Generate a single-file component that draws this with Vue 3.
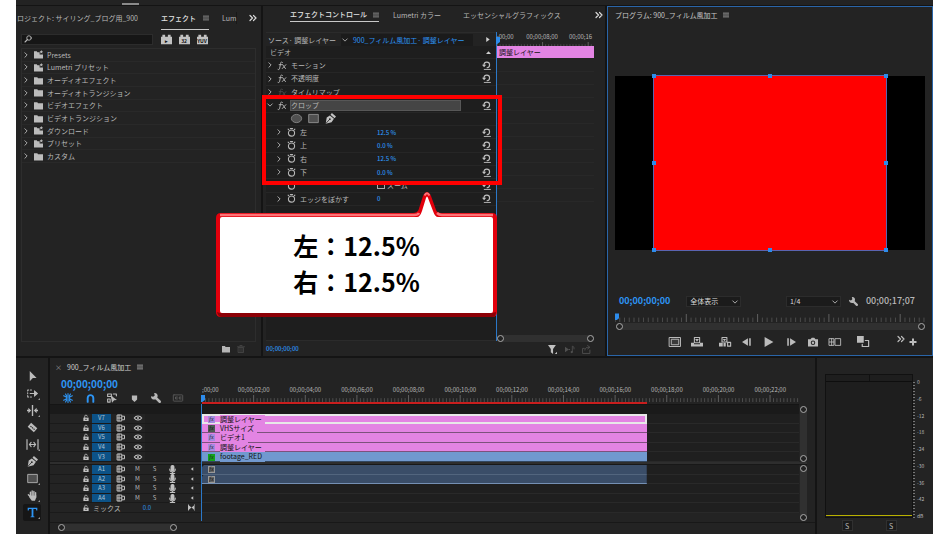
<script setup>
import { h, ref } from 'vue'

const S = 'fill="none" stroke="currentColor" stroke-linecap="round" stroke-linejoin="round"'
const glyphs = {
  chevron: `<path d="M5 2l6 6-6 6" ${S} stroke-width="2.400"/>`,
  down: `<path d="M2 5l6 6 6-6" ${S} stroke-width="2.400"/>`,
  more: `<path d="M2 3l5 5-5 5M9 3l5 5-5 5" ${S} stroke-width="2.400"/>`,
  menu: `<path d="M1 3h14M1 8h14M1 13h14" ${S} stroke-width="1.800"/>`,
  right: '<path d="M4 0l11 8-11 8z" fill="currentColor"/>',
  left: '<path d="M13 1L3 8l10 7z" fill="currentColor"/>',
  up: '<path d="M0 13l8-9 8 9z" fill="currentColor"/>',
  search: `<circle cx="10" cy="6" r="4.500" ${S} stroke-width="1.800"/><path d="M7 9l-5 5" ${S} stroke-width="2.200"/>`,
  folder: '<path d="M0 2h6l1 2h9v11H0z" fill="currentColor"/>',
  preset: '<path d="M0 2h5l1 2h4v4h6v7H0z" fill="currentColor"/><path d="M13 0l1 2 2 .4-1.500 1.500.4 2.100-1.900-1-1.900 1 .4-2.100L10 2.400l2-.4z" fill="currentColor"/>',
  fx: `<path d="M8 2.500C6 .5 5 2 4.600 4.500L3 12.500C2.600 15 1.600 16 0 15M2 6.500h5.500" ${S} stroke-width="1.600"/><path d="M8.500 6.500c2 0 2 7 5 7M14 6.500l-6.500 7" ${S} stroke-width="1.600"/>`,
  reset: `<path d="M3.500 8V6.500a5 5 0 1 1 5.500 5.500" ${S} stroke-width="2"/><path d="M0 6.500h7.500L3.700 11z" fill="currentColor"/><path d="M4 15h11" ${S} stroke-width="1.600"/>`,
  watch: `<circle cx="8" cy="9" r="5.500" ${S} stroke-width="1.900"/><path d="M6 1h4M3 3L2 2M13 3l1-1" ${S} stroke-width="1.900"/>`,
  ellipse: '<ellipse cx="8" cy="8" rx="7.500" ry="6" fill="#505050" stroke="currentColor" stroke-width="1"/>',
  rect: '<path d="M1 2h14v12H1z" fill="#505050" stroke="currentColor" stroke-width="1.200"/>',
  pen: '<path d="M10 0l6 5-2 2.500-6-5zM7 3.500l6 5-3.500 5L1 15.500l1.500-9z" fill="currentColor"/><path d="M1 15.500l5-5.500" stroke="#232323" stroke-width="1.200"/><circle cx="7" cy="9" r="1.300" fill="#232323"/>',
  trash: `<path d="M3 5h10v10H3zM1 3.500h14M6 1h4M6 7v6M10 7v6" ${S} stroke-width="1.500"/>`,
  filter: '<path d="M0 0h14L9 7v9l-4-3V7zM12 16h4v-4z" fill="currentColor"/>',
  playnote: `<path d="M0 3l7 5-7 5zM7 7h2v2H7z" fill="currentColor"/><path d="M13 12V2l3 2v3" ${S} stroke-width="1.500"/><circle cx="12" cy="12.500" r="2" fill="currentColor"/>`,
  export: `<path d="M4 6H1v9h13V9M5 9c0-4 3-5 8-5M10 1l4 3-4 3" ${S} stroke-width="1.600"/>`,
  arrow: '<path d="M4 0l10 10H8.500L4 15z" fill="currentColor"/>',
  trackfwd: `<path d="M1 3h8M1 13h8M1 3v10" ${S} stroke-width="1.500" stroke-dasharray="1.500 2.500"/><path d="M4 8h8M11 4.500l4 3.500-4 3.500z" fill="currentColor" stroke="currentColor" stroke-width="1.500"/>`,
  ripple: '<path d="M7 0h2v16H7zM6 8L2 4v3H0v2h2v3zM10 8l4-4v3h2v2h-2v3z" fill="currentColor"/>',
  razor: '<path d="M6 1l9 8-5 6-9-8z" fill="currentColor"/><path d="M5 6l6 5" stroke="#232323" stroke-width="1.500" stroke-dasharray="2 1"/>',
  slip: `<path d="M0 1v14M16 1v14M3.500 8h9M6 5L3.500 8 6 11M10 5l2.500 3-2.500 3" ${S} stroke-width="1.700"/>`,
  hand: `<path d="M5 9V3M7.500 8V1.500M10 8V2M12.500 9V4M5 10L2 7" ${S} stroke-width="2"/><path d="M4 8h9.500v3l-2 4.500H7L3 10z" fill="currentColor"/>`,
  type: '<path d="M1 1h14v4h-1.500L13 3H9.300v10.500L11 14v1H5v-1l1.700-.500V3H3l-.500 2H1z" fill="currentColor"/>',
  nest: `<path d="M8 1v5M8 10v5M1 4.500l4.500 2M10.500 9.500l4.500 2M1 11.500l4.500-2M10.500 6.500l4.500-2M4 1.500l2 3.500M10 11l2 3.500M12 1.500L10 5M6 11l-2 3.500M5 8h6" ${S} stroke-width="1.700"/>`,
  magnet: `<path d="M3 14V7a5 5 0 0 1 10 0v7" ${S} stroke-width="3.400"/>`,
  linked: `<path d="M1 1.500h6v4H1zM10 1.500h5v3M1 9.500h4v5H1zM7 5l2 3" ${S} stroke-width="1.800"/><path d="M6 4l10 7-4.500.500L8 15.500z" fill="currentColor"/>`,
  marker: '<path d="M2 1h12v9l-6 6-6-6z" fill="currentColor"/>',
  wrench: `<path d="M7 7l7 7" ${S} stroke-width="4"/><path d="M0 5l3.500 1L6 4 5 0c4-.500 6.500 2.500 5.500 6L7 10.500C2 11 0 8.500 0 5z" fill="currentColor"/>`,
  cc: `<rect x="0.500" y="3" width="15" height="10" rx="1" ${S} stroke-width="1.400"/><path d="M7 6.500H4v3h3M13 6.500h-3v3h3" ${S} stroke-width="1.600"/>`,
  lock: `<path d="M1 7h14v9H1z" fill="currentColor"/><path d="M4.500 7V4a3.500 3 0 0 1 7-1" ${S} stroke-width="2.200"/><path d="M8 10v3.500" stroke="#232323" stroke-width="3"/>`,
  sync: `<path d="M1 2h8.500v12H1zM1 8h8.500M11 4.500h4v7h-4M4 2v12" ${S} stroke-width="2"/>`,
  eye: `<path d="M0.500 8C4 2.500 12 2.500 15.500 8 12 13.500 4 13.500 .5 8z" ${S} stroke-width="2.200"/><circle cx="8" cy="8" r="2" fill="currentColor"/>`,
  mic: `<rect x="4.500" y="0" width="7" height="11" rx="3" fill="currentColor"/><path d="M3 7c0 7 10 7 10 0M8 12v3M4 15h8" ${S} stroke-width="1.800"/>`,
  keyframes: '<path d="M1 2l7 6-7 6zM15 2L8 8l7 6zM0 1h2v14H0zM14 1h2v14h-2z" fill="currentColor"/>',
  safe: `<path d="M0.700 2h14.600v12H.7z" ${S} stroke-width="1.300"/><path d="M3 4.300h10v7.400H3z" fill="#3a3a3a" stroke="currentColor" stroke-width="1.300"/>`,
  lift: `<path d="M0 9h4v2h8V9h4v5H0z" fill="currentColor"/><path d="M4.500 2h7v7h-7z" ${S} stroke-width="1.400"/><path d="M5.500 4h5L8 7.500z" fill="currentColor"/>`,
  extract: `<path d="M0 9h5v5H0zM6 9h3v5H6z" fill="currentColor"/><path d="M11.500 8.500h4v5h-4zM4 2h6.500v6H4z" ${S} stroke-width="1.500"/><path d="M5 4h4.500L7.200 7z" fill="currentColor"/>`,
  stepback: '<path d="M9.500 2L0 8l9.500 6zM11.500 2H14v12h-2.500z" fill="currentColor"/>',
  play: '<path d="M1 0l14 8-14 8z" fill="currentColor"/>',
  stepfwd: '<path d="M6.500 2L16 8l-9.500 6zM2 2h2.500v12H2z" fill="currentColor"/>',
  camera: '<path d="M0 3.500h4l2-2.500h4l2 2.500h4V15H0z" fill="currentColor"/><circle cx="8" cy="9" r="3.600" fill="#232323"/><circle cx="8" cy="9" r="2" fill="currentColor"/>',
  compare: `<path d="M8.500 3.500h7v9h-7zM.5 3.500h6v9h-6zM.5 8h6M3.500 3.500v9" ${S} stroke-width="1.200"/>`,
  proxy: `<path d="M0 0h9v9H0z" fill="currentColor"/><path d="M11 6h4.500v8H7v-3" ${S} stroke-width="1.600"/>`,
  plus: '<path d="M6 1h4v5h5v4h-5v5H6v-5H1V6h5z" fill="currentColor"/>',
  brick: '<path d="M0 4h2V1h4v3h4V1h4v3h2v11H0z" fill="currentColor"/>',
}
const Icon = (p) => h('svg', { class: 'icon', viewBox: '0 0 16 16', 'aria-hidden': 'true', innerHTML: glyphs[p.name] })
Icon.props = ['name']

const Ticks = (p) => {
  const lines = []
  const step = p.major / 15
  for (let i = 0; i * step <= 100; i++) {
    lines.push(h('line', {
      x1: i * step + '%', x2: i * step + '%', y1: i % 15 ? '45%' : '0%', y2: '100%',
      stroke: i % 15 ? '#4c4c4c' : '#606060',
    }))
  }
  return h('svg', { class: 'ticks', 'aria-hidden': 'true' }, lines)
}
Ticks.props = ['major']

const folders = [
  ['preset', 'Presets'], ['preset', 'Lumetri プリセット'], ['folder', 'オーディオエフェクト'],
  ['folder', 'オーディオトランジション'], ['folder', 'ビデオエフェクト'], ['folder', 'ビデオトランジション'],
  ['preset', 'ダウンロード'], ['preset', 'プリセット'], ['folder', 'カスタム'],
]
const bricks = [['▸', '高速処理エフェクト'], ['32', '32 ビットカラー'], ['YUV', 'YUV エフェクト']]
const crops = [['左', '12.5 %'], ['上', '0.0 %'], ['右', '12.5 %'], ['下', '0.0 %']]
const handles = ['tl', 'tc', 'tr', 'ml', 'mr', 'bl', 'bc', 'br']
const transport = [
  ['safe', 'セーフマージン'], ['lift', 'リフト'], ['extract', '抽出'], ['stepback', '前のフレーム'], ['play', '再生'],
  ['stepfwd', '次のフレーム'], ['camera', 'フレームを書き出し'], ['compare', '比較表示'], ['proxy', 'プロキシの切り替え'],
]
const tools = [
  ['arrow', '選択'], ['trackfwd', 'トラックの前方選択'], ['ripple', 'リップル'], ['razor', 'レーザー'], ['slip', 'スリップ'],
  ['pen', 'ペン'], ['rect', '長方形'], ['hand', '手のひら'], ['type', '横書き文字'],
]
const options = [
  ['nest', 'ネスト', true], ['magnet', 'スナップ', true], ['linked', 'リンク', false],
  ['marker', 'マーカー', false], ['wrench', '表示設定', false], ['cc', 'キャプション', false],
]
const times = ['02', '04', '06', '08', '10', '12', '14', '16', '18', '20', '22'].map((t) => `00;00;${t};00`)
const video = [
  { id: 'V7', name: '調整レイヤー', kind: 'selected' },
  { id: 'V6', name: 'VHSサイズ', kind: 'dark' },
  { id: 'V5', name: 'ビデオ1', kind: '' },
  { id: 'V4', name: '調整レイヤー', kind: '' },
  { id: 'V3', name: 'footage_RED', kind: 'footage' },
]
const audio = ['A1', 'A2', 'A3', 'A4']
const levels = ['0', '-6', '-12', '-18', '-24', '-30', '-36', '-42', 'dB']
const tool = ref('type')
const query = ref('')
const zoom = ref(false)
const clipLength = 74.5
</script>

<template>
  <main class="app">
    <div class="topbar"><span class="grip"></span></div>

    <div class="upper">
      <section class="panel effects">
        <nav class="tabs">
          <button class="project">ロジェクト: サイリング_ブログ用_900</button>
          <button class="active">エフェクト</button>
          <button class="menu" aria-label="パネルメニュー"><Icon name="menu" /></button>
          <button class="cut">Lum</button>
          <button class="more" aria-label="その他のパネル"><Icon name="more" /></button>
        </nav>
        <div class="searchbar">
          <label class="search"><Icon name="search" /><input v-model="query" type="text" aria-label="検索"></label>
          <button v-for="b in bricks" :key="b[0]" class="brick" :aria-label="b[1]"><Icon name="brick" /><span>{{ b[0] }}</span></button>
        </div>
        <div class="tree">
          <ul>
            <li v-for="f in folders" :key="f[1]"><Icon name="chevron" /><Icon :name="f[0]" class="dir" />{{ f[1] }}</li>
          </ul>
        </div>
        <footer>
          <button aria-label="新規ビン"><Icon name="folder" /></button>
          <button class="off" aria-label="削除"><Icon name="trash" /></button>
        </footer>
      </section>

      <section class="panel controls">
        <nav class="tabs">
          <button class="active">エフェクトコントロール</button>
          <button class="menu" aria-label="パネルメニュー"><Icon name="menu" /></button>
          <button class="lumetri">Lumetri カラー</button>
          <button class="graphics">エッセンシャルグラフィックス</button>
          <button class="more" aria-label="その他のパネル"><Icon name="more" /></button>
        </nav>
        <div class="split">
          <div class="params">
            <div class="source">
              <span>ソース· 調整レイヤー</span>
              <button><Icon name="down" />900_フィルム風加工· 調整レイヤー</button>
              <Icon name="right" class="end" />
            </div>
            <div class="rows">
              <div class="row heading"><span class="name">ビデオ</span><Icon name="up" class="end" /></div>
              <div class="row"><Icon name="chevron" class="tw" /><Icon name="fx" class="tag" /><span class="name">モーション</span><button class="reset" aria-label="リセット"><Icon name="reset" /></button></div>
              <div class="row"><Icon name="chevron" class="tw" /><Icon name="fx" class="tag" /><span class="name">不透明度</span><button class="reset" aria-label="リセット"><Icon name="reset" /></button></div>
              <div class="row"><Icon name="chevron" class="tw" /><Icon name="fx" class="tag dim" /><span class="name">タイムリマップ</span></div>
              <div class="row"><Icon name="down" class="tw" /><Icon name="fx" class="tag" /><span class="name picked">クロップ</span><button class="reset" aria-label="リセット"><Icon name="reset" /></button></div>
              <div class="row masks">
                <button aria-label="楕円形マスク"><Icon name="ellipse" /></button>
                <button aria-label="長方形マスク"><Icon name="rect" /></button>
                <button class="nib" aria-label="ペンマスク"><Icon name="pen" /></button>
              </div>
              <div v-for="c in crops" :key="c[0]" class="row sub">
                <Icon name="chevron" class="tw" /><Icon name="watch" class="tag" /><span class="key">{{ c[0] }}</span>
                <button class="value">{{ c[1] }}</button><button class="reset" aria-label="リセット"><Icon name="reset" /></button>
              </div>
              <div class="row sub">
                <span class="tw"></span><Icon name="watch" class="tag" /><span class="key"></span>
                <label class="check"><input v-model="zoom" type="checkbox">ズーム</label><button class="reset" aria-label="リセット"><Icon name="reset" /></button>
              </div>
              <div class="row sub">
                <Icon name="chevron" class="tw" /><Icon name="watch" class="tag" /><span class="key">エッジをぼかす</span>
                <button class="value">0</button><button class="reset" aria-label="リセット"><Icon name="reset" /></button>
              </div>
            </div>
          </div>
          <div class="keys">
            <div class="keyruler">
              <div class="times"><span>;00;00</span><span>00;00;08;00</span><span>00;00;16</span></div>
              <Ticks major="47" />
            </div>
            <div class="keyclip">調整レイヤー</div>
            <div class="keylines"></div>
            <div class="hscroll"><i></i><i></i></div>
            <span class="head"></span>
          </div>
        </div>
        <footer>
          <button class="time">00;00;00;00</button>
          <button aria-label="フィルター"><Icon name="filter" /></button>
          <button class="off" aria-label="オーディオ再生"><Icon name="playnote" /></button>
          <button class="off" aria-label="書き出し"><Icon name="export" /></button>
        </footer>

        <div class="frame"></div>
        <div class="callout">
          <svg viewBox="0 0 281 126" aria-hidden="true">
            <path d="M5 22H197Q201 22 202.500 19L207 5Q211-3 215 5L220 19Q221 22 225 22H276Q281 22 281 27V121Q281 126 276 126H5Q0 126 0 121V27Q0 22 5 22z" fill="#e2000c" />
            <path d="M1 121Q2 126 6 126H276Q280 126 280 121L276 122H4z" fill="#8c0006" />
            <path d="M4 24H198Q202 24 203 22M221 22Q223 24 226 24H277" fill="none" stroke="#ff7377" stroke-width="2.500" />
            <path d="M208.500 4.500Q211 0 213.500 4.500" fill="none" stroke="#ff7377" stroke-width="2" />
            <path d="M6 26H201Q204 26 206 20L210 7Q211 4 212 7L217 20Q219 26 222 26H275Q277 26 277 28V120Q277 122 275 122H6Q4 122 4 120V28Q4 26 6 26z" fill="#fff" />
          </svg>
          <p>左：12.5%<br>右：12.5%</p>
        </div>
      </section>

      <section class="panel program">
        <nav class="tabs">
          <button>プログラム: 900_フィルム風加工</button>
          <button class="menu" aria-label="パネルメニュー"><Icon name="menu" /></button>
        </nav>
        <div class="viewer">
          <div class="cropped"><i v-for="p in handles" :key="p" :class="p"></i></div>
        </div>
        <div class="status">
          <button class="time">00;00;00;00</button>
          <label class="pick fit"><select aria-label="表示倍率"><option>全体表示</option></select><Icon name="down" /></label>
          <label class="pick"><select aria-label="再生解像度"><option>1/4</option></select><Icon name="down" /></label>
          <button class="setup" aria-label="設定"><Icon name="wrench" /></button>
          <span class="duration">00;00;17;07</span>
        </div>
        <div class="progruler"><Ticks major="23" /><span class="marker"></span></div>
        <div class="hscroll"><i></i><i></i></div>
        <div class="transport">
          <button v-for="t in transport" :key="t[0]" :class="['do', t[0]]" :aria-label="t[1]"><Icon :name="t[0]" /></button>
          <button class="last" aria-label="その他"><Icon name="more" /></button>
          <button class="add" aria-label="ボタンエディター"><Icon name="plus" /></button>
        </div>
      </section>
    </div>

    <div class="lower">
      <aside class="panel tools">
        <button v-for="t in tools" :key="t[0]" :class="{ on: tool === t[0] }" :aria-label="t[1]" @click="tool = t[0]"><Icon :name="t[0]" /></button>
      </aside>

      <section class="panel timeline">
        <nav class="seq"><button class="close" aria-label="閉じる">×</button><span>900_フィルム風加工</span><button class="menu" aria-label="パネルメニュー"><Icon name="menu" /></button></nav>
        <div class="board">
          <div class="corner">
            <button class="time">00;00;00;00</button>
            <div class="opts"><button v-for="o in options" :key="o[0]" :class="['opt-' + o[0], { lit: o[2] }]" :aria-label="o[1]"><Icon :name="o[0]" /></button></div>
          </div>
          <div class="ruler">
            <div class="times"><span>;00;00</span><span v-for="t in times" :key="t">{{ t }}</span></div>
            <Ticks major="8.65" />
            <div class="render" :style="{ width: clipLength + '%' }"></div>
          </div>
          <div></div>

          <div class="band"></div><div class="band"></div><div></div>

          <div class="heads">
            <div v-for="v in video" :key="v.id" class="trk">
              <Icon name="lock" class="c1" /><button class="id">{{ v.id }}</button><Icon name="sync" class="c3" /><Icon name="eye" class="c4" /><span class="blank"></span>
            </div>
          </div>
          <div class="lanes">
            <div v-for="v in video" :key="v.id" class="lane">
              <div class="clip" :class="v.kind" :style="{ width: clipLength + '%' }"><b>fx</b><span>{{ v.name }}</span></div>
            </div>
          </div>
          <div class="vscroll"><i></i><i></i></div>

          <div class="rule"></div><div class="rule"></div><div class="rule"></div>

          <div class="heads">
            <div v-for="a in audio" :key="a" class="trk">
              <Icon name="lock" class="c1" /><button class="id">{{ a }}</button><Icon name="sync" class="c3" /><button class="c4">M</button><button class="c5">S</button><Icon name="mic" class="c6" /><Icon name="left" class="c7" />
            </div>
            <div class="trk mix"><Icon name="lock" class="c1" /><span>ミックス</span><button class="gain">0.0</button><Icon name="keyframes" class="c7" /></div>
          </div>
          <div class="lanes">
            <div v-for="(a, n) in [...audio, 'mix']" :key="a" class="lane">
              <div v-if="n < 2" class="clip sound" :style="{ width: clipLength + '%' }"><b>fx</b></div>
            </div>
          </div>
          <div class="vscroll tall"><i></i><i></i></div>
          <div class="needle"><span class="marker"></span></div>
        </div>
        <div class="under"><div class="hscroll"><i></i><i></i></div></div>
      </section>

      <section class="panel meters">
        <div class="meter"><div class="bars"><i></i><i></i></div><ul><li v-for="l in levels" :key="l">{{ l }}</li></ul></div>
        <div class="solo"><button aria-label="左をソロ">S</button><button aria-label="右をソロ">S</button></div>
      </section>
    </div>
  </main>
</template>

<style>
body { margin: 0; background: #fff; }
</style>

<style scoped>
* { box-sizing: border-box; }
.app { display: flex; flex-direction: column; height: 100vh; min-height: 534px; margin: 0 17px 0 16px; background: #141414; color: #b8b8b8; font: 7px/10px "Noto Sans CJK JP", "Noto Sans", sans-serif; overflow: hidden; }
button { padding: 0; border: 0; background: none; color: inherit; font: inherit; white-space: nowrap; display: flex; align-items: center; justify-content: center; flex: none; }
ul { list-style: none; margin: 0; padding: 0; }
.icon { width: 8px; height: 8px; flex: none; overflow: visible; display: block; }
.topbar { flex: 0 0 5px; background: #232323; margin-bottom: 1px; padding: 3px 0 0 106px; }
.grip { display: block; width: 17px; height: 2px; background: #8a8a8a; }
.upper { flex: 350 0 0; display: grid; grid-template-columns: 245fr 342fr 326fr; gap: 2px; margin-bottom: 2px; min-height: 0; }
.lower { flex: 176 0 0; display: grid; grid-template-columns: 32px 1fr 116px; gap: 2px; min-height: 0; }
.panel { background: #232323; display: flex; flex-direction: column; min-width: 0; min-height: 0; }
.tabs { display: flex; align-items: flex-start; flex: none; height: 26px; padding-top: 2px; }
.tabs button { height: 13px; }
.tabs .active { color: #e4e4e4; border-bottom: 1px solid #c8c8c8; font-weight: 500; }
.tabs .menu { width: 6px; margin-left: 6px; }
.menu .icon { width: 6px; height: 6px; }
.tabs .more { margin-left: auto; color: #d8d8d8; }
.hscroll { display: flex; justify-content: space-between; height: 7px; background: #303030; border-radius: 4px; flex: none; }
.hscroll i, .vscroll i { width: 7px; height: 7px; border: 1px solid #aaa; border-radius: 50%; background: #232323; display: block; }
.time { color: #2d95f5; }
.off { color: #4c4c4c; }
footer { display: flex; align-items: center; height: 14px; flex: none; }

.effects .tabs { height: 27px; padding-top: 6px; }
.effects .tabs button { height: 12px; }
.effects .project { width: 122px; margin-right: 23px; justify-content: flex-start; overflow: hidden; padding-left: 1px; }
.effects .tabs .active { height: 18px; width: 48px; justify-content: flex-start; padding-bottom: 5px; margin-right: -8px; }
.effects .tabs .menu { margin-left: 2px; margin-right: 13px; }
.effects .cut { border-right: 1px solid #181818; }
.effects .tabs .more { margin-right: 4px; }
.searchbar { display: flex; align-items: center; padding: 0 5px; height: 12px; margin-bottom: 3px; }
.search { display: flex; align-items: center; flex: 0 0 56%; height: 11px; background: #161616; border: 1px solid #2c2c2c; padding-left: 2px; margin-right: 8px; }
.search input { flex: 1; min-width: 0; height: 9px; border: 0; padding: 0 2px; background: none; color: inherit; font: inherit; outline: none; }
.brick { display: grid; width: 11px; height: 11px; margin-right: 7px; }
.brick > * { grid-area: 1 / 1; }
.brick .icon { width: 11px; height: 11px; color: #c2c2c2; }
.brick span { color: #111; font-size: 5px; line-height: 11px; font-weight: 700; padding-top: 1px; }
.tree { flex: 1; margin: 0 5px; border: 1px solid #2d2d2d; min-height: 0; }
.tree ul { display: grid; grid-auto-rows: 1fr; height: 114px; }
.tree li { display: flex; align-items: center; border-bottom: 1px solid #292929; padding-left: 1px; }
.tree .icon { width: 6px; height: 6px; }
.tree .icon.dir { width: 9px; height: 9px; margin: 0 4px 0 5px; color: #bcbcbc; }
.effects footer { justify-content: flex-end; padding-right: 16px; gap: 7px; color: #b5b5b5; }

.controls { position: relative; padding: 0 11px 0 3px; }
.controls .tabs { padding-left: 24px; margin-right: -9px; }
.controls .tabs .active { width: 89px; justify-content: flex-start; margin-right: -12px; height: 14px; padding-bottom: 1px; }
.controls .tabs .lumetri { margin: 0 22px 0 14px; }
.controls .tabs .more { margin-right: 0; }
.split { flex: 1; display: grid; grid-template-columns: 230fr 98fr; min-height: 0; }
.params { background: #1e1e1e; border: 1px solid #2b2b2b; border-width: 1px 0; min-width: 0; }
.source { display: flex; align-items: center; height: 13px; background: #232323; padding-left: 2px; }
.source button { color: #2d95f5; background: #1b1b1b; margin-left: 5px; padding-right: 8px; height: 12px; gap: 5px; }
.source button .icon { width: 6px; height: 6px; color: #aaa; margin-left: 1px; }
.end.icon { width: 5px; height: 5px; margin-left: auto; margin-right: 6px; color: #d0d0d0; }
.rows { display: grid; grid-auto-rows: 1fr; height: 160px; }
.row { display: flex; align-items: center; border-bottom: 1px solid #262626; min-width: 0; }
.row .name { flex: 1; margin-right: 15px; border: 1px solid transparent; line-height: 9px; }
.row .picked { background: #454545; border-color: #575757; }
.heading .name { padding-left: 3px; }
.heading .end.icon { margin-right: 5px; }
.tw { width: 8px; flex: none; }
.tw.icon { width: 6px; height: 6px; margin: 0 1px; }
.tag.icon { width: 9px; height: 9px; margin: 0 3px 0 4px; }
.icon.dim { color: #4a4a4a; }
.reset { width: 20px; color: #c0c0c0; }
.reset .icon { width: 9px; height: 9px; }
.masks { padding-left: 25px; gap: 6px; color: #999; }
.masks .icon { width: 11px; height: 11px; }
.masks .nib { color: #c4c4c4; }
.sub { padding-left: 9px; }
.key { width: 77px; flex: none; margin-left: 1px; }
.value { flex: 1; justify-content: flex-start; color: #2d95f5; font-size: 6px; font-weight: 500; padding-top: 1px; }
.check { flex: 1; display: flex; align-items: center; gap: 2px; }
.check input { appearance: none; width: 8px; height: 8px; margin: 0; border: 1px solid #aaa; flex: none; }
.keys { position: relative; display: flex; flex-direction: column; border-left: 1px solid #2b78c8; min-width: 0; }
.keyruler { height: 14px; overflow: hidden; }
.times { display: flex; height: 10px; font-size: 6px; overflow: hidden; }
.times span { flex: 1 0 0; min-width: 0; text-align: center; white-space: nowrap; }
.times span:first-child { flex: 0.5 0 0; text-align: left; }
.keyruler .times span { flex: 0 0 47%; }
.keyruler .times span:first-child { flex-basis: 23%; }
.keyruler .times span:last-child { flex-basis: 30%; text-align: left; padding-left: 4px; }
.ticks { display: block; width: 100%; height: 5px; }
.keyclip { height: 13px; background: #e384e3; color: #111; padding-left: 2px; line-height: 12px; flex: none; border-bottom: 1px solid #222; }
.keylines { flex: 1; background: repeating-linear-gradient(#232323 0 12px, #282828 12px 13px) 0 0 / 100% 146px no-repeat; }
.keys .hscroll { margin-bottom: -1px; }
.head, .marker { position: absolute; width: 4px; height: 7px; background: #2d8ceb; clip-path: polygon(0 0, 100% 0, 100% 70%, 30% 100%, 0 100%); }
.head { left: -1px; top: 5px; }
.controls footer { gap: 8px; color: #c0c0c0; padding-right: 3px; margin-top: 1px; }
.controls footer .icon { width: 9px; height: 9px; }
.controls footer .time { margin-right: auto; font-size: 6px; font-weight: 500; }
.controls footer .off { color: #505050; }
.frame { position: absolute; left: -1px; right: 103px; top: 89px; height: 90px; border: 4px solid #f00; }
.callout { position: absolute; left: -47px; top: 185px; width: 281px; z-index: 2; display: grid; }
.callout > * { grid-area: 1 / 1; }
.callout svg { width: 100%; display: block; overflow: visible; }
.callout p { margin: 0; padding-top: 36px; text-align: center; color: #000; font-size: 25px; line-height: 36px; font-weight: 700; }

.program { border: 1px solid #2a65a8; padding: 0 7px; }
.program .tabs { height: 69px; padding-top: 1px; color: #c8c8c8; }
.program .tabs .menu { margin-left: 5px; }
.viewer { background: #000; aspect-ratio: 16 / 9; padding: 0 12.5%; flex: none; }
.cropped { position: relative; height: 100%; background: #f00; outline: 1px solid #5a64b0; }
.cropped i { position: absolute; width: 4px; height: 4px; background: #2d8ceb; margin: -2px; }
.tl, .tc, .tr { top: 0; }
.ml, .mr { top: 50%; }
.bl, .bc, .br { top: 100%; }
.tl, .ml, .bl { left: 0; }
.tc, .bc { left: 50%; }
.tr, .mr, .br { left: 100%; }
.status { display: flex; align-items: center; height: 12px; margin-top: 45px; padding: 0 10px 0 4px; font-size: 9px; flex: none; }
.status .time { font-weight: 700; }
.pick { position: relative; display: flex; width: 55px; height: 11px; background: #1b1b1b; border: 1px solid #2c2c2c; }
.pick.fit { margin: 0 auto 0 16px; }
.pick select { appearance: none; width: 100%; border: 0; padding: 0 3px; background: none; color: #dadada; font: 7px/9px "Noto Sans CJK JP", sans-serif; }
.pick .icon { position: absolute; right: 2px; top: 2px; width: 6px; height: 6px; pointer-events: none; }
.setup { margin: 0 8px; }
.setup .icon { width: 9px; height: 9px; }
.duration { font-weight: 500; }
.progruler { position: relative; height: 8px; margin-top: 7px; flex: none; }
.progruler .ticks { height: 8px; }
.progruler .marker { left: 0; top: -1px; }
.program .hscroll { margin: 1px 0 0 1px; }
.transport { display: flex; align-items: center; height: 24px; padding: 0 0 0 49px; color: #bcbcbc; }
.transport .icon { width: 10px; height: 10px; }
.transport .do { width: 22px; }
.transport .extract, .transport .proxy { margin-left: 6px; }
.safe .icon, .lift .icon, .extract .icon, .compare .icon, .proxy .icon { width: 12px; height: 12px; }
.transport .last { margin-left: auto; margin-bottom: 7px; }
.transport .last .icon, .transport .add .icon { width: 8px; height: 8px; }
.transport .add { margin-left: 4px; margin-right: 8px; }

.tools { padding: 10px 7px 0; }
.tools button { position: relative; height: 17px; color: #bcbcbc; border-radius: 2px; }
.tools .icon { width: 11px; height: 11px; }
.tools .on { background: #161616; color: #2d95f5; }
.tools button:nth-child(n+2):not(:nth-child(4)):not(:nth-child(6))::after { content: ""; position: absolute; right: 1px; bottom: 2px; border: 1px solid #999; border-top-color: transparent; border-left-color: transparent; }

.seq { display: flex; align-items: center; height: 18px; padding-left: 6px; color: #d0d0d0; flex: none; }
.seq .close { width: 5px; margin-right: 6px; color: #999; }
.seq .menu { margin-left: 6px; }
.board { position: relative; display: grid; grid-template-columns: 152px 1fr 8px; grid-template-rows: 28px 10px 48px 3px 56px; padding-right: 8px; }
.corner { padding-left: 11px; min-width: 0; }
.corner .time { font-size: 10px; line-height: 16px; height: 16px; font-weight: 700; }
.opts { display: flex; gap: 12px; padding: 1px 0 0 2px; }
.opts button { width: 10px; height: 10px; }
.opts .icon { width: 10px; height: 10px; }
.opts .opt-marker .icon { width: 7px; height: 7px; }
.opts .opt-magnet .icon { width: 9px; height: 9px; }
.opts .lit { color: #2d95f5; }
.opts .opt-cc { color: #5c5c5c; }
.ruler { padding-top: 9px; min-width: 0; }
.ruler .times { padding-right: 3px; }
.ruler .ticks { height: 7px; }
.render { height: 2px; background: #c81e1e; }
.band { background: #1a1a1a; border-top: 1px solid #151515; }
.heads, .lanes { display: grid; grid-template-rows: repeat(5, 1fr); height: 48px; min-width: 0; }
.trk { display: grid; grid-template-columns: 29px 13px 19px 19px 15px 19px 17px 21px; grid-template-rows: 100%; align-items: center; justify-items: center; border-bottom: 1px solid #1a1a1a; background: #232323; min-height: 0; }
.trk > * { grid-row: 1; }
.trk button { font-size: 6px; line-height: 8px; }
.c1 { grid-column: 2; }
.trk .id { grid-column: 3; justify-self: stretch; align-self: stretch; background: #0c5287; color: #b4c6d4; }
.c3 { grid-column: 4; }
.c4 { grid-column: 5; }
.c5 { grid-column: 6; }
.c6 { grid-column: 7; }
.c7 { grid-column: 8; }
.blank { grid-column: 6 / 9; justify-self: stretch; align-self: stretch; background: #1f1f1f; }
.trk .icon { width: 8px; height: 8px; color: #c0c0c0; }
.trk .icon.c1 { width: 6px; height: 6px; }
.trk .icon.c7 { width: 4px; height: 4px; }
.trk .icon.c6 { width: 9px; height: 9px; }
.mix span { grid-column: 3 / 5; justify-self: start; line-height: 8px; padding-left: 1px; }
.trk .gain { grid-column: 5 / 7; color: #2d95f5; }
.trk.mix .icon.c7 { width: 7px; height: 7px; }
.lane { background: #1f1f1f; border-bottom: 1px solid #292929; min-height: 0; display: flex; }
.clip { display: flex; align-items: center; background: #e384e3; color: #111; padding-left: 6px; margin-bottom: -1px; border-bottom: 1px solid #7d527d; line-height: 8px; min-width: 0; }
.clip b { width: 7px; height: 7px; background: #a58ae0; color: #222; font: italic 6px/7px "Liberation Serif", serif; text-align: center; margin: 1px 5px 0 0; flex: none; }
.clip span { align-self: flex-start; background: inherit; padding-right: 3px; line-height: 8px; height: 10px; margin-bottom: -1px; }
.selected { border: 2px solid #e8e8e8; padding-left: 4px; }
.selected span { margin-top: -1px; }
.dark b { background: #4d5a52; color: #111; }
.footage { background: #7199cf; border-bottom-color: #33475f; }
.footage b { background: #11a51b; }
.sound { background: #3a4d68; border-bottom-color: #7590b4; clip-path: polygon(2px 0, 100% 0, 100% 100%, 0 100%, 0 2px); }
.sound b { background: #666; border: 1px solid #999; line-height: 5px; color: #111; }
.rule { background: #2e2e2e; border-bottom: 1px solid #181818; }
.vscroll { display: flex; flex-direction: column; justify-content: space-between; align-items: center; background: #303030; border-radius: 4px; margin: -8px 0 0 1px; height: 56px; }
.vscroll.tall { margin-top: 0; }
.needle { position: absolute; left: 151px; top: 28px; bottom: 0; width: 1px; background: #2b78c8; }
.needle .marker { left: 0; top: -9px; }
.under { margin-top: 1px; padding: 1px 16px 3px 8px; border-top: 1px solid #181818; }
.under .hscroll { width: 119px; }

.meters { padding: 16px 0 0 8px; }
.meter { display: flex; height: 144px; }
.bars { flex: 1; display: flex; background: linear-gradient(#0e0e0e, #0e0e0e) 0 6px / 100% 1px no-repeat #1e1e1e; border: 1px solid #111; }
.bars i { flex: 1; border-bottom: 1px solid #b8b000; margin-bottom: 1px; }
.bars i + i { background: linear-gradient(#111, #111) 0 0 / 1px 6px no-repeat; }
.meter ul { width: 20px; display: flex; flex-direction: column; justify-content: space-between; padding-left: 4px; margin: 3px 0 -2px; font-size: 5px; background: repeating-linear-gradient(#777 0 1px, transparent 1px 3px) 0 5px / 2px 136px no-repeat; }
.meter li { line-height: 9px; }
.solo { display: flex; justify-content: space-around; padding-right: 20px; margin-top: 2px; }
.solo button { width: 11px; height: 11px; background: #1b1b1b; border: 1px solid #303030; }
</style>
